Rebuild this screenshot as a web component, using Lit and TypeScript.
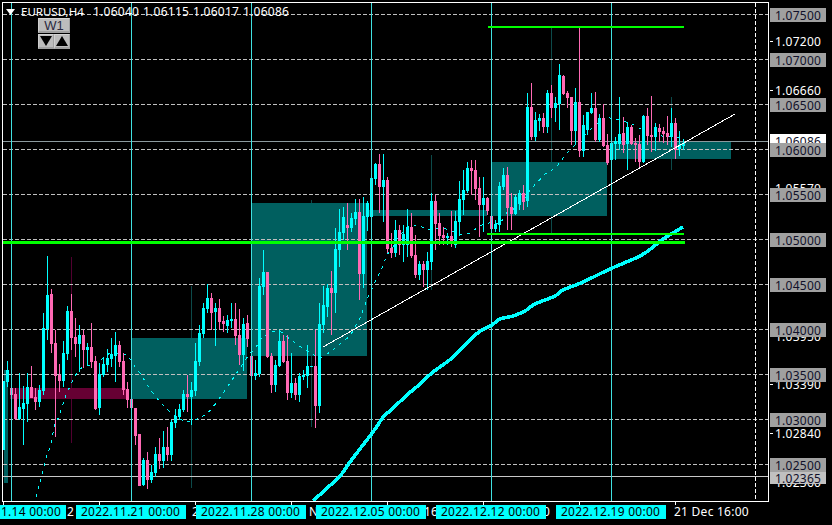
import { LitElement, html, css, svg } from "lit";
import { customElement } from "lit/decorators.js";

// x, kind (c = cyan up, p = pink down), bodyTop, bodyBottom, wickTop, wickBottom
const CANDLES = `7 c 370 382 361 387;11 p 388 395 388 395;15 p 394 419 388 420;19 c 407 419 373 420;23 c 403 409 386 445;27 c 387 404 373 422;31 p 387 398 366 398;35 p 397 402 388 410;39 c 390 402 385 407;43 c 328 391 313 395;47 c 295 329 256 340;51 p 294 344 289 353;55 p 343 376 330 437;59 p 375 381 364 392;63 c 353 381 341 387;67 c 311 354 306 360;71 p 311 338 294 350;75 p 337 344 318 357;79 c 335 344 325 372;83 p 335 350 330 368;87 c 347 350 343 365;91 p 347 362 323 368;95 p 361 409 356 410;99 c 374 408 363 415;103 c 364 375 357 377;107 c 358 365 349 372;111 c 354 359 338 367;115 c 345 356 332 382;119 p 345 362 341 367;123 p 361 390 353 395;127 p 389 400 382 408;131 p 399 408 398 410;135 p 408 436 408 445;139 p 434 486 434 486;143 c 460 485 458 486;147 p 460 480 452 489;151 c 472 480 465 483;155 c 454 473 447 477;159 p 454 461 438 469;163 c 447 461 431 468;167 p 447 455 427 461;171 c 422 455 420 461;175 c 416 423 409 428;179 c 409 417 404 420;183 c 394 410 390 412;187 p 394 397 375 412;191 c 390 397 382 425;195 c 361 391 343 396;199 c 333 362 325 366;203 c 308 334 303 338;207 c 298 309 284 313;211 p 298 313 293 330;215 c 308 312 303 346;219 p 308 322 299 329;223 p 321 324 316 332;227 c 320 326 315 333;231 c 319 321 303 328;235 p 319 336 303 345;239 p 335 355 309 365;243 c 324 355 318 371;247 p 323 339 315 347;251 p 356 376 356 380;255 c 373 376 360 380;259 c 286 374 278 377;263 c 272 287 250 295;267 p 272 357 272 358;271 p 356 385 353 393;275 c 365 385 360 392;279 c 341 366 330 367;283 p 341 362 335 363;287 p 361 393 335 400;291 c 383 393 353 398;295 p 383 395 378 400;299 c 376 395 373 402;303 c 375 377 370 380;307 c 366 376 345 388;311 c 366 367 366 367;315 p 366 406 330 428;319 c 324 406 303 413;323 c 305 325 286 333;327 c 288 307 284 317;331 p 288 293 271 335;335 c 249 293 228 313;339 c 232 250 209 267;343 c 217 233 207 240;347 p 225 228 203 250;351 c 218 228 213 232;355 c 212 219 199 225;359 p 212 274 199 300;363 c 216 274 197 288;367 c 203 217 201 231;371 c 178 217 165 220;375 c 164 179 163 185;379 p 164 187 154 213;383 c 180 187 154 222;387 p 180 249 177 253;391 p 248 253 233 258;395 c 230 253 220 257;399 p 230 245 225 255;403 c 234 245 225 262;407 c 227 245 209 257;411 p 227 256 213 258;415 p 255 275 235 278;419 c 264 275 261 280;423 p 264 270 261 287;427 c 261 270 252 290;431 c 201 262 193 270;435 p 201 224 195 250;439 p 223 236 213 245;443 p 235 238 227 245;447 c 236 238 233 245;451 p 236 244 211 247;455 c 221 245 211 248;459 c 199 222 181 236;463 c 190 200 170 215;467 c 168 191 162 193;471 p 168 171 160 195;475 p 170 189 160 200;479 p 188 205 177 237;483 c 198 205 177 232;487 p 198 211 197 215;491 p 216 229 216 232;495 c 224 229 220 232;499 c 186 225 182 232;503 c 175 187 168 190;507 p 175 208 167 230;511 p 207 214 193 230;515 c 197 214 195 215;519 c 193 204 190 210;523 p 193 202 185 210;527 c 107 201 93 207;531 p 107 137 83 140;535 c 120 137 112 141;539 c 118 121 114 131;543 p 118 127 113 133;547 c 93 127 90 133;551 p 93 108 85 118;555 c 103 108 97 122;559 c 75 104 64 130;563 p 76 94 75 95;567 p 93 98 91 108;571 p 97 131 97 145;575 c 102 131 88 145;579 p 102 151 28 157;583 c 125 151 115 157;587 c 112 130 112 135;591 c 108 113 93 114;595 p 108 140 92 142;599 c 118 140 114 142;603 p 118 146 104 147;607 p 145 163 134 165;611 c 143 160 140 161;615 c 141 144 137 160;619 c 134 144 97 150;623 p 133 145 117 153;627 c 127 144 122 170;631 p 127 144 125 145;635 p 143 145 138 162;639 p 144 162 135 168;643 c 116 162 115 163;647 p 116 136 108 145;651 p 135 137 96 152;655 c 127 137 123 151;659 p 128 132 124 142;663 p 131 134 127 143;667 p 133 137 116 145;671 c 123 137 108 147;675 p 123 150 118 159;679 c 145 149 131 156;683 c 143 146 139 150`
  .split(";")
  .map((row) => row.split(" "));

const FAST_MA =
  "36,497 38,490 40,483 42,475 44,467 46,458 48,453 51,443 55,423 59,417 62,407 66,395 75,376 79,370 83,367 90,365 98,362 110,353 127,355 131,360 135,367 140,373 148,386 155,396 163,405 170,412 175,416 185,422 195,420 207,414 217,402 228,386 240,368 250,353 255,349 262,337 272,332 280,331 291,340 298,345 306,350 312,353 317,358 322,357 330,352 340,344 350,336 360,318 368,297 377,278 382,268 387,255 393,247 398,237 403,232 408,227 415,225 422,227 427,230 434,228 443,228 452,231 463,235 470,233 477,228 482,225 492,222 500,224 507,212 512,210 520,205 530,190 545,174 555,168 558,165 563,158 568,152 573,147 585,135 595,125 602,120 607,117 613,119 619,120 626,122 632,124 637,127 650,133 662,136 673,137 679,138";
const SLOW_POINTS: [number, number][] = [
  [313, 501], [326, 489], [340, 476], [350, 462], [363, 445], [373, 432], [384, 416], [390, 411],
  [407, 395], [420, 384], [433, 372], [452, 358], [473, 337], [482, 330], [492, 325], [500, 319],
  [513, 316], [525, 311], [535, 304], [555, 296], [563, 290], [583, 282], [610, 269], [640, 256],
  [653, 247], [663, 239], [683, 227],
];

// Catmull-Rom through the traced points, so the heavy average bends as softly as in the chart.
function smoothPath(p: [number, number][]): string {
  let d = `M${p[0][0]} ${p[0][1]}`;
  for (let i = 0; i < p.length - 1; i++) {
    const a = p[Math.max(i - 1, 0)];
    const b = p[i];
    const c = p[i + 1];
    const e = p[Math.min(i + 2, p.length - 1)];
    const c1 = [b[0] + (c[0] - a[0]) / 6, b[1] + (c[1] - a[1]) / 6];
    const c2 = [c[0] - (e[0] - b[0]) / 6, c[1] - (e[1] - b[1]) / 6];
    d += `C${c1[0]} ${c1[1]} ${c2[0]} ${c2[1]} ${c[0]} ${c[1]}`;
  }
  return d;
}

// x, width, top, bottom of the zone rectangles
const TEAL_BOXES = [
  [4, 4, 370, 483],
  [131, 116, 338, 399],
  [251, 116, 203, 356],
  [367, 120, 210, 216],
  [491, 116, 162, 216],
  [611, 120, 141, 159],
];
const WEEK_WICKS = [
  [191, 286, 488],
  [311, 200, 427],
  [431, 155, 290],
  [551, 27, 235],
  [671, 97, 170],
];
const GRID_Y = [14, 59, 104, 149, 194, 239, 284, 329, 374, 419, 464];
const PERIOD_X = [11, 131, 251, 371, 491, 611];
const GRID_LABELS = ["1.07500", "1.07000", "1.06500", "1.06000", "1.05500", "1.05000", "1.04500", "1.04000", "1.03500", "1.03000", "1.02500"];
const SCALE_LABELS: [string, number][] = [
  ["1.07200", 46],
  ["1.06660", 95],
  ["1.05570", 193],
  ["1.03950", 341],
  ["1.03390", 389],
  ["1.02840", 438],
  ["1.02360", 487],
];
const TIME_BOXES: [string, number][] = [
  ["2022.11.21 00:00", 76],
  ["2022.11.28 00:00", 196],
  ["2022.12.05 00:00", 316],
  ["2022.12.12 00:00", 436],
  ["2022.12.19 00:00", 556],
];
const TIME_TICKS = [3, 99, 195, 291, 387, 483, 579, 675];

@customElement("app-root")
export class AppRoot extends LitElement {
  static styles = css`
    :host {
      display: block;
      position: relative;
      width: 832px;
      height: 525px;
      background: #000;
      overflow: hidden;
      font-family: "Noto Sans", "DejaVu Sans", sans-serif;
    }
    svg {
      display: block;
    }
    .crisp {
      shape-rendering: crispEdges;
    }
    .teal { fill: #005f5f; }
    .maroon { fill: #660033; }
    .up { fill: #00ffff; }
    .down { fill: #ff69b4; }
    .grid {
      stroke: #c0c0c0;
      stroke-width: 1;
      stroke-dasharray: 4 2;
      shape-rendering: crispEdges;
    }
    .grid.white {
      stroke: #fff;
    }
    .vline {
      stroke: #40e0e0;
      stroke-width: 1;
      shape-rendering: crispEdges;
    }
    .frame {
      fill: none;
      stroke: #fff;
      stroke-width: 1;
      shape-rendering: crispEdges;
    }
    .fast {
      fill: none;
      stroke: #00ffff;
      stroke-width: 1;
      stroke-dasharray: 3 5;
      shape-rendering: crispEdges;
    }
    .slow {
      fill: none;
      stroke: #00ffff;
      stroke-width: 3.5;
      stroke-linejoin: round;
      shape-rendering: crispEdges;
    }
    .trend {
      stroke: #fff;
      stroke-width: 1;
      shape-rendering: crispEdges;
    }
    .green {
      fill: #00ff00;
    }
    text {
      font-size: 12px;
      letter-spacing: 0.25px;
      font-family: "Noto Sans", "DejaVu Sans", sans-serif;
      fill: #fff;
    }
    text.legend {
      font-size: 11.5px;
      letter-spacing: 0;
    }
    text.dark {
      fill: #10102a;
    }
    text.black {
      fill: #000;
    }
    .buttons {
      position: absolute;
      left: 38px;
      top: 18px;
      width: 32px;
      display: grid;
      grid-template-columns: 1fr 1fr;
      gap: 1px 0;
    }
    .btn {
      height: 15px;
      box-sizing: border-box;
      background: #bcbcbc;
      border-top: 1px solid #d4d4d4;
      border-left: 1px solid #d0d0d0;
      border-bottom: 2px solid #a0a0a0;
      border-right: 1px solid #a0a0a0;
      display: flex;
      align-items: center;
      justify-content: center;
      color: #2a2a40;
      font-family: "Liberation Sans", sans-serif;
      font-size: 13px;
      line-height: 1;
    }
    .wide {
      grid-column: span 2;
    }
  `;

  private grid() {
    return GRID_Y.map(
      (y) => svg`<line class="grid" x1="3" x2="769" y1=${y + 0.5} y2=${y + 0.5}></line>`
    );
  }

  private candles() {
    return CANDLES.map((c) => {
      const x = +c[0];
      const cls = c[1] === "c" ? "up" : "down";
      const [top, bottom, hi, lo] = [+c[2], +c[3], +c[4], +c[5]];
      return svg`
        <rect class=${cls} x=${x} y=${hi} width="1" height=${Math.max(lo - hi, 1)}></rect>
        <rect class=${cls} x=${x - 1} y=${top} width="3" height=${Math.max(bottom - top, 1)}></rect>`;
    });
  }

  private priceScale() {
    return svg`
      ${SCALE_LABELS.map(([t, y]) => svg`<text x="775" y=${y}>${t}</text>`)}
      ${SCALE_LABELS.map(([, y]) => svg`<rect fill="#fff" x="770" y=${y - 5} width="3" height="1"></rect>`)}
      <rect fill="#fff" x="770" y="134" width="56" height="10"></rect>
      <text class="dark" x="775" y="146">1.06086</text>
      ${GRID_LABELS.map((t, i) => {
        const y = 8 + i * 45;
        return svg`
          <rect fill="#a0a0a0" x="770" y=${y} width="56" height="14"></rect>
          <text class="dark" x="775" y=${y + 12}>${t}</text>`;
      })}
      <rect fill="#c0c0c0" x="770" y="472" width="56" height="12"></rect>
      <text class="dark" x="775" y="483">1.02365</text>`;
  }

  private timeScale() {
    return svg`
      ${TIME_TICKS.map((x) => svg`<rect fill="#fff" x=${x} y="502" width="1" height="3"></rect>`)}
      <text x="67" y="516">2</text>
      <text x="192" y="516">2</text>
      <text x="309" y="516">N</text>
      <text x="424" y="516">16</text>
      <text x="543" y="516">0</text>
      <text x="674" y="516">21 Dec 16:00</text>
      <rect fill="#00ffff" x="0" y="505" width="66" height="14"></rect>
      <text class="black" x="1" y="516">1.14 00:00</text>
      ${TIME_BOXES.map(
        ([t, x]) => svg`
          <rect fill="#00ffff" x=${x} y="505" width="110" height="14"></rect>
          <text class="black" x=${x + 5} y="516">${t}</text>`
      )}`;
  }

  render() {
    return html`
      <svg width="832" height="525" viewBox="0 0 832 525">
        <g class="crisp">
          <rect x="71" y="257" width="1" height="186" fill="#520030"></rect>
          ${WEEK_WICKS.map(
            ([x, a, b]) => svg`<rect x=${x} y=${a} width="1" height=${b - a} fill="#0c4a4a"></rect>`
          )}
          ${TEAL_BOXES.map(
            ([x, w, a, b]) => svg`<rect class="teal" x=${x} y=${a} width=${w} height=${b - a}></rect>`
          )}
          <rect class="maroon" x="10" y="388" width="116" height="11"></rect>
        </g>
        ${this.grid()}
        <line x1="3" x2="769" y1="141.5" y2="141.5" stroke="#8c9a9e" class="crisp"></line>
        <line x1="3" x2="769" y1="476.5" y2="476.5" stroke="#c8c8c8" class="crisp"></line>
        <polyline class="fast" points=${FAST_MA}></polyline>
        <g class="crisp">
          <rect class="up" x="3" y="381" width="2" height="69"></rect>
          ${this.candles()}
        </g>
        ${PERIOD_X.map(
          (x) => svg`<line class="vline" x1=${x + 0.5} x2=${x + 0.5} y1="3" y2="501"></line>`
        )}
        <line class="grid white" x1="755.5" x2="755.5" y1="3" y2="501"></line>
        <path class="slow" d=${smoothPath(SLOW_POINTS)}></path>
        <line class="trend" x1="323" y1="347" x2="735" y2="114"></line>
        <g class="crisp">
          <rect class="green" x="488" y="26" width="196" height="2"></rect>
          <rect class="green" x="487" y="233" width="197" height="2"></rect>
          <rect class="green" x="3" y="241" width="682" height="3"></rect>
        </g>
        <rect class="frame" x="2.5" y="2.5" width="766" height="499"></rect>
        <polygon points="6,9 15,9 10.5,15" fill="#fff"></polygon>
        <text class="legend" x="21" y="16">EURUSD,H4</text>
        <text x="93" y="16">1.06040</text>
        <text x="143" y="16">1.06115</text>
        <text x="193" y="16">1.06017</text>
        <text x="243" y="16">1.06086</text>
        ${this.priceScale()} ${this.timeScale()}
      </svg>
      <div class="buttons">
        <div class="btn wide">W1</div>
        <div class="btn">
          <svg width="12" height="10" viewBox="0 0 12 10"><polygon points="0,0 12,0 6,10" fill="#000"></polygon></svg>
        </div>
        <div class="btn">
          <svg width="12" height="10" viewBox="0 0 12 10"><polygon points="6,0 12,10 0,10" fill="#000"></polygon></svg>
        </div>
      </div>
    `;
  }
}
